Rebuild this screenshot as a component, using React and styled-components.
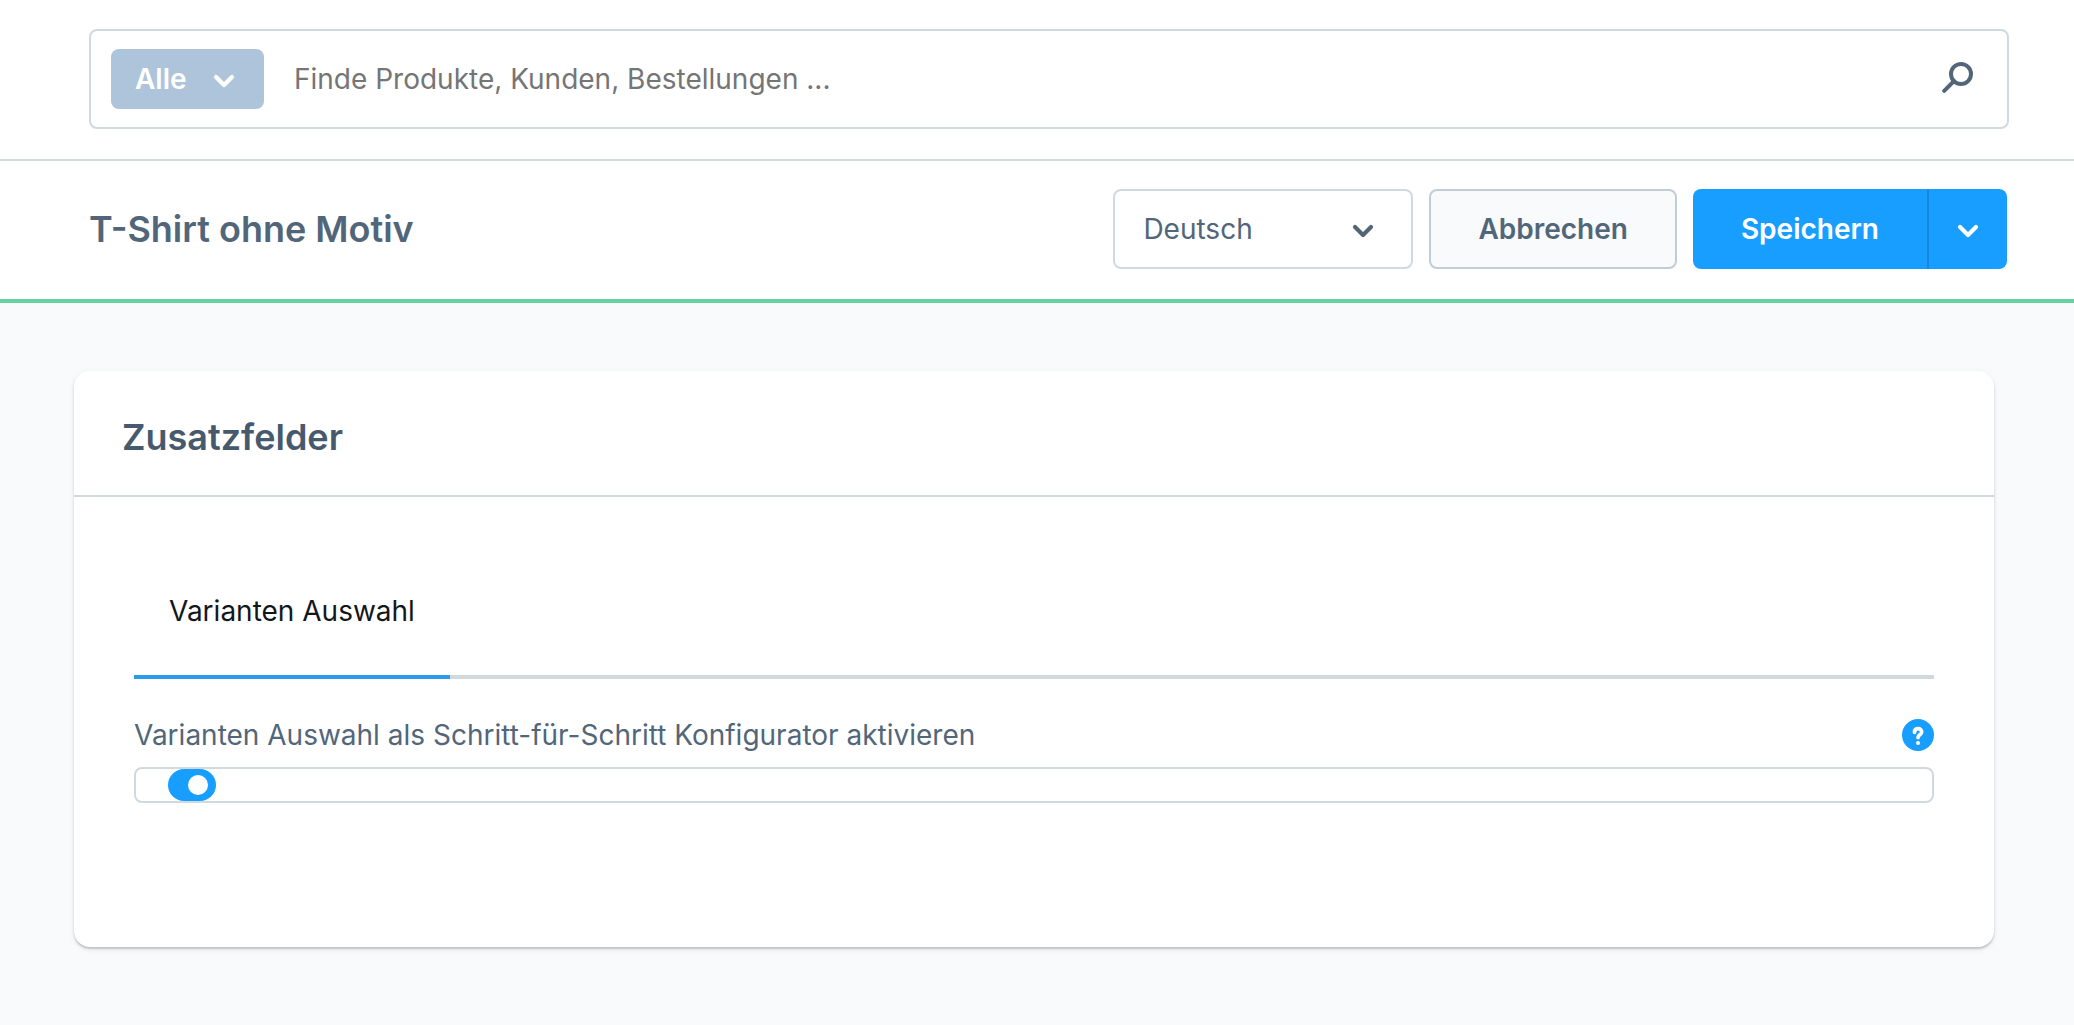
import React, { useState } from "react";
import styled, { createGlobalStyle } from "styled-components";

const GlobalStyle = createGlobalStyle`
  *,
  *::before,
  *::after {
    box-sizing: border-box;
  }

  body {
    margin: 0;
    background-color: #f9fafb;
    font-family: Inter, "Liberation Sans", sans-serif;
    font-size: 28px;
    line-height: 36px;
    color: #52667a;
  }

  button,
  input,
  select {
    margin: 0;
    font: inherit;
    color: inherit;
  }
`;

const TopBar = styled.header`
  padding: 29px 65px 30px 89px;
  background-color: #fff;
  border-bottom: 2px solid #d1d9e0;
`;

const SearchBox = styled.form`
  display: flex;
  align-items: center;
  gap: 30px;
  height: 100px;
  padding: 0 33px 0 20px;
  border: 2px solid #d1d9e0;
  border-radius: 8px;
`;

const ScopeButton = styled.button`
  display: flex;
  align-items: center;
  justify-content: space-between;
  width: 153px;
  height: 60px;
  padding: 0 29px 0 24px;
  border: 0;
  border-radius: 8px;
  background-color: #aec4db;
  color: #fff;
  font-weight: 600;
  cursor: pointer;
`;

const SearchInput = styled.input`
  flex: 1;
  min-width: 0;
  padding: 0;
  border: 0;
  outline: none;
  background: transparent;

  &::placeholder {
    color: #757575;
    opacity: 1;
  }
`;

const IconButton = styled.button`
  display: flex;
  padding: 0;
  border: 0;
  background: transparent;
  cursor: pointer;
`;

const PageBar = styled.div`
  display: flex;
  align-items: center;
  justify-content: space-between;
  padding: 28px 67px 30px 89px;
  background-color: #fff;
  border-bottom: 4px solid #65d1a5;
`;

const PageTitle = styled.h1`
  margin: 0;
  font-size: 36px;
  line-height: 48px;
  font-weight: 600;
`;

const Actions = styled.div`
  display: flex;
  gap: 16px;
`;

const SelectWrap = styled.div`
  display: grid;
  align-items: center;
  width: 300px;

  > * {
    grid-area: 1 / 1;
  }

  > svg {
    justify-self: end;
    margin-right: 39px;
    pointer-events: none;
  }
`;

const LanguageSelect = styled.select`
  width: 100%;
  height: 80px;
  padding: 0 28px;
  border: 2px solid #d1d9e0;
  border-radius: 8px;
  background-color: #fff;
  appearance: none;
`;

const Button = styled.button`
  height: 80px;
  padding: 0 ${(props) => (props.$primary ? "48px" : "47px")};
  border: ${(props) => (props.$primary ? "0" : "2px solid #c2ccd6")};
  border-radius: ${(props) => (props.$primary ? "8px 0 0 8px" : "8px")};
  background-color: ${(props) => (props.$primary ? "#189eff" : "#f9fafb")};
  color: ${(props) => (props.$primary ? "#fff" : "#52667a")};
  font-weight: 600;
  cursor: pointer;
`;

const ButtonGroup = styled.div`
  display: flex;
`;

const MenuButton = styled.button`
  display: flex;
  align-items: center;
  justify-content: center;
  width: 80px;
  height: 80px;
  padding: 0;
  border: 0;
  border-left: 2px solid #1687d9;
  border-radius: 0 8px 8px 0;
  background-color: #189eff;
  color: #fff;
  cursor: pointer;
`;

const Content = styled.main`
  padding: 68px 80px 78px 74px;
`;

const Card = styled.section`
  border-radius: 16px;
  background-color: #fff;
  box-shadow: 0 2px 2px rgba(0, 0, 0, 0.18), 0 2px 6px rgba(0, 0, 0, 0.08);
`;

const CardHeader = styled.div`
  padding: 42px 48px 34px;
  border-bottom: 2px solid #d1d9e0;
`;

const CardTitle = styled.h2`
  margin: 0;
  font-size: 36px;
  line-height: 48px;
  font-weight: 600;
  color: #475a6d;
`;

const CardBody = styled.div`
  padding: 60px 60px 144px;
`;

const Tabs = styled.div`
  display: flex;
  border-bottom: 4px solid #d1d9e0;
`;

const Tab = styled.button`
  height: 122px;
  margin-bottom: -4px;
  padding: 0 35px 10px;
  border: 0;
  border-bottom: 4px solid ${(props) => (props.$active ? "#2b9bee" : "transparent")};
  background: transparent;
  color: #14171a;
  cursor: pointer;
`;

const FieldHead = styled.div`
  display: flex;
  align-items: center;
  justify-content: space-between;
  padding: 38px 0 14px;
`;

const HelpButton = styled.button`
  display: flex;
  width: 32px;
  height: 32px;
  padding: 0;
  border: 0;
  border-radius: 50%;
  background-color: #189eff;
  color: #fff;
  cursor: pointer;
`;

const SwitchField = styled.div`
  display: flex;
  padding: 0 32px;
  border: 2px solid #d1d9e0;
  border-radius: 8px;
`;

const Switch = styled.input`
  display: flex;
  align-items: center;
  width: 48px;
  height: 32px;
  padding: 0 8px;
  border-radius: 16px;
  background-color: #c2ccd6;
  appearance: none;
  cursor: pointer;

  &::before {
    content: "";
    width: 20px;
    height: 20px;
    border-radius: 50%;
    background-color: #fff;
  }

  &:checked {
    justify-content: flex-end;
    background-color: #189eff;
  }
`;

const ChevronIcon = () => (
  <svg width="22" height="18" viewBox="0 0 22 18" fill="none" aria-hidden="true">
    <path
      d="M3 7l8 8 8-8"
      stroke="currentColor"
      strokeWidth="4.200"
      strokeLinecap="round"
      strokeLinejoin="round"
    />
  </svg>
);

const SearchIcon = () => (
  <svg width="32" height="34" viewBox="0 0 32 34" fill="none" aria-hidden="true">
    <circle cx="19" cy="12" r="10" stroke="currentColor" strokeWidth="4" />
    <path d="M12 19L2.200 28.800" stroke="currentColor" strokeWidth="4" strokeLinecap="round" />
  </svg>
);

const HelpIcon = () => (
  <svg width="32" height="32" viewBox="0 0 32 32" fill="none" aria-hidden="true">
    <path
      d="M12.500 13.300c0-2.300 1.500-3.600 3.600-3.600s3.500 1.400 3.500 3.200c0 3-3.600 2.800-3.600 5.700"
      stroke="currentColor"
      strokeWidth="3.800"
      strokeLinecap="round"
    />
    <circle cx="16" cy="24" r="2" fill="currentColor" />
  </svg>
);

const App = () => {
  const [term, setTerm] = useState("");
  const [language, setLanguage] = useState("de");
  const [stepByStep, setStepByStep] = useState(true);

  return (
    <>
      <GlobalStyle />
      <TopBar>
        <SearchBox role="search" onSubmit={(e) => e.preventDefault()}>
          <ScopeButton type="button">
            Alle
            <ChevronIcon />
          </ScopeButton>
          <SearchInput
            type="text"
            aria-label="Suche"
            placeholder="Finde Produkte, Kunden, Bestellungen ..."
            value={term}
            onChange={(e) => setTerm(e.target.value)}
          />
          <IconButton type="submit" aria-label="Suchen">
            <SearchIcon />
          </IconButton>
        </SearchBox>
      </TopBar>

      <PageBar>
        <PageTitle>T-Shirt ohne Motiv</PageTitle>
        <Actions>
          <SelectWrap>
            <LanguageSelect
              aria-label="Sprache"
              value={language}
              onChange={(e) => setLanguage(e.target.value)}
            >
              <option value="de">Deutsch</option>
              <option value="en">English</option>
            </LanguageSelect>
            <ChevronIcon />
          </SelectWrap>
          <Button type="button">Abbrechen</Button>
          <ButtonGroup>
            <Button type="button" $primary>
              Speichern
            </Button>
            <MenuButton type="button" aria-label="Weitere Optionen">
              <ChevronIcon />
            </MenuButton>
          </ButtonGroup>
        </Actions>
      </PageBar>

      <Content>
        <Card>
          <CardHeader>
            <CardTitle>Zusatzfelder</CardTitle>
          </CardHeader>
          <CardBody>
            <Tabs role="tablist">
              <Tab type="button" role="tab" aria-selected="true" $active>
                Varianten Auswahl
              </Tab>
            </Tabs>
            <FieldHead>
              <label htmlFor="stepByStep">
                Varianten Auswahl als Schritt-für-Schritt Konfigurator aktivieren
              </label>
              <HelpButton type="button" aria-label="Hilfe">
                <HelpIcon />
              </HelpButton>
            </FieldHead>
            <SwitchField>
              <Switch
                id="stepByStep"
                type="checkbox"
                checked={stepByStep}
                onChange={(e) => setStepByStep(e.target.checked)}
              />
            </SwitchField>
          </CardBody>
        </Card>
      </Content>
    </>
  );
};

export default App;
